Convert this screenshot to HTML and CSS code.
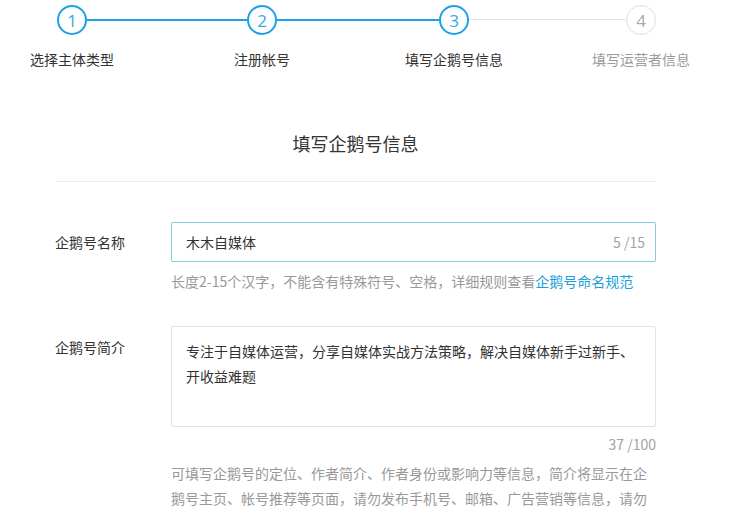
FILE: index.html
```html
<!DOCTYPE html>
<html lang="zh-CN">
<head>
<meta charset="utf-8">
<title>填写企鹅号信息</title>
<link rel="stylesheet" href="styles.css">
</head>
<body>
<div class="steps">
  <div class="step done">
    <div class="circle">1</div>
    <div class="label">选择主体类型</div>
  </div>
  <div class="line l1"></div>
  <div class="step done">
    <div class="circle">2</div>
    <div class="label">注册帐号</div>
  </div>
  <div class="line l2"></div>
  <div class="step done">
    <div class="circle">3</div>
    <div class="label">填写企鹅号信息</div>
  </div>
  <div class="line l3 todo"></div>
  <div class="step todo">
    <div class="circle">4</div>
    <div class="label">填写运营者信息</div>
  </div>
</div>

<div class="content">
  <h1 class="title">填写企鹅号信息</h1>
  <div class="divider"></div>

  <div class="row row-name">
    <div class="field-label">企鹅号名称</div>
    <div class="field">
      <div class="input-box">
        <input class="input" type="text" value="木木自媒体">
        <span class="count">5 /15</span>
      </div>
      <div class="hint">长度2-15个汉字，不能含有特殊符号、空格，详细规则查看<a class="link" href="#">企鹅号命名规范</a></div>
    </div>
  </div>

  <div class="row row-intro">
    <div class="field-label top">企鹅号简介</div>
    <div class="field">
      <textarea class="textarea">专注于自媒体运营，分享自媒体实战方法策略，解决自媒体新手过新手、开收益难题</textarea>
      <div class="count-below">37 /100</div>
      <div class="hint multi">可填写企鹅号的定位、作者简介、作者身份或影响力等信息，简介将显示在企鹅号主页、帐号推荐等页面，请勿发布手机号、邮箱、广告营销等信息，请勿</div>
    </div>
  </div>
</div>
</body>
</html>
```

FILE: styles.css
```css
html, body {
  margin: 0;
  padding: 0;
  background: #fff;
  overflow: hidden;
}
body {
  font-family: "Noto Sans CJK SC", "Microsoft YaHei", sans-serif;
  color: #333;
  font-size: 14px;
}

/* steps */
.steps {
  display: flex;
  align-items: flex-start;
  margin-left: 57px;
  width: 599px;
  padding-top: 5px;
}
.step {
  flex: none;
  width: 30px;
  display: flex;
  flex-direction: column;
  align-items: center;
}
.circle {
  width: 30px;
  height: 30px;
  box-sizing: border-box;
  border: 2px solid #1ba1e6;
  border-radius: 50%;
  display: flex;
  align-items: center;
  justify-content: center;
  font-family: "Open Sans", "Noto Sans", sans-serif;
  font-size: 17px;
  color: #3aa9e3;
  line-height: 1;
}
.label {
  margin-top: 14px;
  line-height: 20px;
  font-size: 14px;
  white-space: nowrap;
  color: #333;
}
.step.todo .circle {
  border: 1px solid #dedede;
  color: #aaa;
}
.step.todo .label {
  color: #9c9c9c;
}
.line {
  height: 2px;
  margin-top: 14px;
  background: #1ba1e6;
}
.line.l1 { flex: 160; }
.line.l2 { flex: 162; }
.line.l3 { flex: 157; }
.line.todo {
  height: 1px;
  background: #e2e2e2;
}

/* content */
.content {
  margin: 0 75px 0 55px;
}
.title {
  margin: 62px 0 0;
  font-size: 18px;
  font-weight: normal;
  line-height: 24px;
  text-align: center;
  color: #333;
}
.divider {
  margin-top: 26px;
  border-top: 1px solid #ececec;
}

.row {
  display: flex;
}
.row-name {
  margin-top: 40px;
}
.row-intro {
  margin-top: 35px;
}
.field-label {
  flex: none;
  width: 116px;
  line-height: 40px;
  font-size: 14px;
  color: #333;
}
.field-label.top {
  line-height: 20px;
  padding-top: 11px;
}
.field {
  flex: 1;
  min-width: 0;
}
.input-box {
  display: flex;
  align-items: center;
  height: 40px;
  box-sizing: border-box;
  border: 1px solid #86cbe6;
  border-radius: 2px;
  padding: 0 10px 0 14px;
}
.input {
  flex: 1;
  min-width: 0;
  border: none;
  outline: none;
  padding: 0;
  font-family: inherit;
  font-size: 14px;
  color: #333;
  background: transparent;
}
.count {
  flex: none;
  color: #a3a3a3;
  font-size: 14px;
}
.hint {
  margin-top: 9px;
  line-height: 20px;
  font-size: 14px;
  color: #999;
}
.link {
  color: #1a9fdc;
  text-decoration: none;
}
.textarea {
  display: block;
  width: 100%;
  height: 101px;
  box-sizing: border-box;
  border: 1px solid #e3e3e3;
  border-radius: 2px;
  padding: 12px 15px 0 14px;
  resize: none;
  outline: none;
  font-family: inherit;
  font-size: 14px;
  line-height: 25px;
  color: #333;
  overflow: hidden;
}
.count-below {
  margin-top: 7px;
  text-align: right;
  line-height: 20px;
  font-size: 14px;
  color: #a3a3a3;
}
.hint.multi {
  margin-top: 7px;
  line-height: 25px;
}
```
